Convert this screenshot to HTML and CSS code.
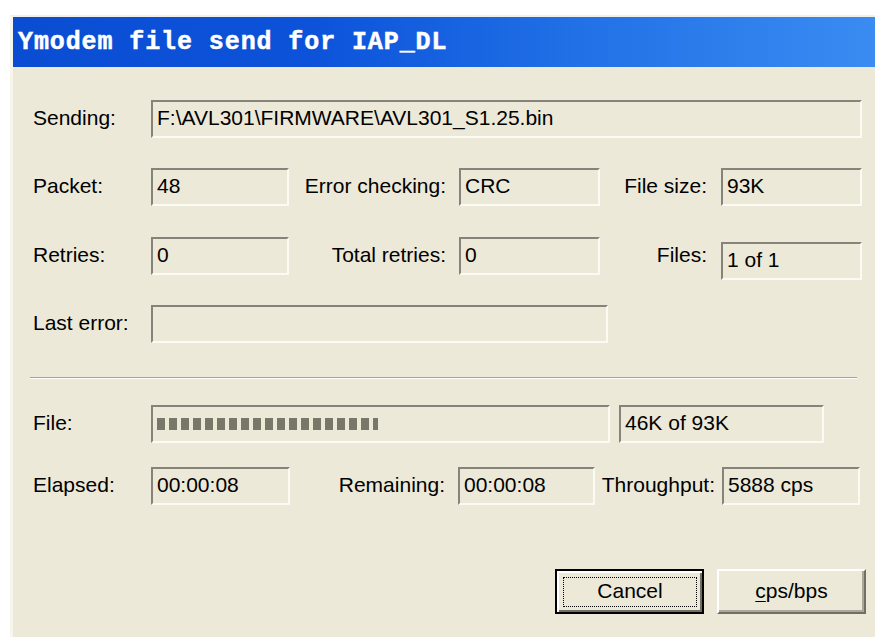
FILE: index.html
```html
<!DOCTYPE html>
<html lang="en">
<head>
<meta charset="utf-8">
<title>Ymodem file send for IAP_DL</title>
<link rel="stylesheet" href="styles.css">
</head>
<body>
<div class="window">
  <div class="titlebar"><span class="title">Ymodem file send for IAP_DL</span></div>
  <div class="client">
    <div class="row">
      <span class="lbl">Sending:</span>
      <div class="field w-full">F:\AVL301\FIRMWARE\AVL301_S1.25.bin</div>
    </div>

    <div class="row gap30">
      <span class="lbl">Packet:</span>
      <div class="field w138">48</div>
      <span class="lbl-mid">Error checking:</span>
      <div class="field w141">CRC</div>
      <span class="lbl-right">File size:</span>
      <div class="field w141">93K</div>
    </div>

    <div class="row gap31">
      <span class="lbl">Retries:</span>
      <div class="field w138">0</div>
      <span class="lbl-mid">Total retries:</span>
      <div class="field w141">0</div>
      <span class="lbl-right">Files:</span>
      <div class="field w141 low">1 of 1</div>
    </div>

    <div class="row gap30">
      <span class="lbl">Last error:</span>
      <div class="field w457"></div>
    </div>

    <div class="separator"></div>

    <div class="row gap26">
      <span class="lbl">File:</span>
      <div class="field w459 progress">
        <i class="blk"></i><i class="blk"></i><i class="blk"></i><i class="blk"></i><i class="blk"></i><i class="blk"></i><i class="blk"></i><i class="blk"></i><i class="blk"></i><i class="blk"></i><i class="blk"></i><i class="blk"></i><i class="blk"></i><i class="blk"></i><i class="blk"></i><i class="blk"></i><i class="blk"></i><i class="blk"></i><i class="blk last"></i>
      </div>
      <div class="field w205 count">46K of 93K</div>
    </div>

    <div class="row gap24">
      <span class="lbl">Elapsed:</span>
      <div class="field w139">00:00:08</div>
      <span class="lbl-remain">Remaining:</span>
      <div class="field w137">00:00:08</div>
      <span class="lbl-rate">Throughput:</span>
      <div class="field w138">5888 cps</div>
    </div>

    <div class="buttons">
      <button class="btn default" type="button"><span class="focus">Cancel</span></button>
      <button class="btn" type="button"><span><u>c</u>ps/bps</span></button>
    </div>
  </div>
</div>
</body>
</html>
```

FILE: styles.css
```css
* {
  box-sizing: border-box;
}

html,
body {
  margin: 0;
  background: #ffffff;
}

body {
  font-family: "Liberation Sans", Arial, sans-serif;
  font-size: 21px;
  color: #000000;
  overflow: hidden;
}

/* dialog frame */
.window {
  margin: 15px 0 0 10px;
  height: 640px;
  border-top: 2px solid #f3f1e6;
  border-left: 3px solid #f7f5ec;
  background: #ece9d8;
}

.titlebar {
  height: 50px;
  display: flex;
  align-items: center;
  padding-left: 5px;
  background: linear-gradient(to right, #0a4dd3 0%, #0c53da 35%, #2170e6 65%, #3a8cf2 100%);
}

.title {
  font-family: "Liberation Mono", "Courier New", monospace;
  font-weight: bold;
  font-size: 25px;
  letter-spacing: 0.9px;
  color: #ffffff;
  -webkit-text-stroke: 0.5px #ffffff;
  white-space: pre;
}

/* client area */
.client {
  padding: 33px 0 0 20px;
  display: flex;
  flex-direction: column;
}

.row {
  display: flex;
  align-items: center;
  height: 38px;
}

.gap24 { margin-top: 24px; }
.gap26 { margin-top: 26px; }
.gap30 { margin-top: 30px; }
.gap31 { margin-top: 31px; }

.lbl {
  width: 118px;
  flex: none;
  padding-bottom: 3px;
  white-space: nowrap;
}

.lbl-mid,
.lbl-right,
.lbl-remain,
.lbl-rate {
  flex: none;
  text-align: right;
  padding-bottom: 3px;
  white-space: nowrap;
}

.lbl-mid { width: 170px; padding-right: 13px; }
.lbl-right { width: 121px; padding-right: 14px; }
.lbl-remain { width: 168px; padding-right: 13px; }
.lbl-rate { width: 127px; padding-right: 7px; }

/* sunken static fields */
.field {
  flex: none;
  height: 38px;
  display: flex;
  align-items: center;
  padding: 0 4px 3px 4px;
  border-style: solid;
  border-width: 2px;
  border-color: #85837a #fbfaf3 #fbfaf3 #85837a;
  background: #ece9d8;
  white-space: nowrap;
}

.w-full { width: 711px; }
.w137 { width: 137px; }
.w138 { width: 138px; }
.w139 { width: 139px; }
.w141 { width: 141px; }
.w205 { width: 205px; }
.w457 { width: 457px; }
.w459 { width: 459px; }

.low { margin-top: 10px; }

.count { margin-left: 9px; }

/* progress bar */
.progress {
  gap: 4px;
  padding: 0 4px;
}

.blk {
  display: block;
  width: 8px;
  height: 12px;
  background: #77776a;
}

.blk.last {
  width: 5px;
}

.separator {
  margin: 34px 0 0 -3px;
  width: 827px;
  height: 2px;
  border-top: 1px solid #a5a293;
  border-bottom: 1px solid #ffffff;
}

/* push buttons */
.buttons {
  display: flex;
  gap: 13px;
  margin-top: 64px;
  padding-left: 522px;
}

.btn {
  width: 149px;
  height: 45px;
  padding: 0;
  font: inherit;
  color: #000000;
  background: #ece9d8;
  border: 2px solid;
  border-color: #ffffff #716f64 #716f64 #ffffff;
  box-shadow: inset -2px -2px 0 #aca899;
  display: flex;
  align-items: center;
  justify-content: center;
}

.btn span {
  padding-bottom: 2px;
}

.btn.default {
  border-color: #000000;
  box-shadow: inset 2px 2px 0 #ffffff, inset -2px -2px 0 #716f64;
  padding: 6px 5px 5px 6px;
}

.btn .focus {
  width: 100%;
  height: 100%;
  display: flex;
  align-items: center;
  justify-content: center;
  border: 1px dotted #000000;
}

.btn u {
  text-decoration-thickness: 1px;
  text-underline-offset: 3px;
}
```
